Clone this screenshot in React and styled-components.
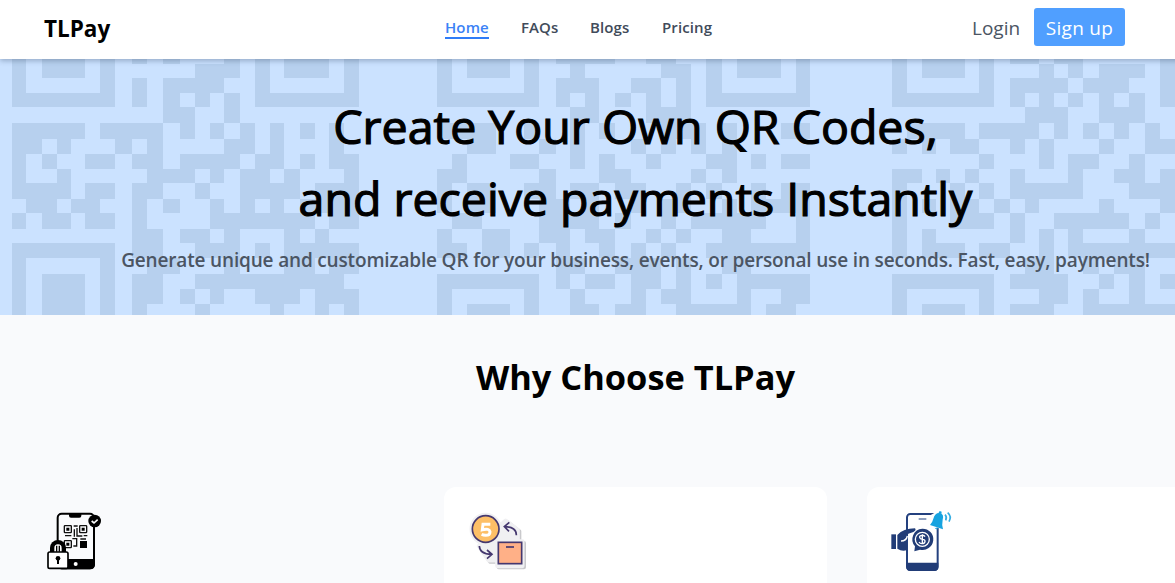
import React from "react";
import styled, { createGlobalStyle } from "styled-components";

const GlobalStyle = createGlobalStyle`
  *, *::before, *::after { box-sizing: border-box; }
  html, body { margin: 0; padding: 0; height: 583px; overflow: hidden; }
  body {
    background: #f9fafc;
    font-family: "Open Sans", "Noto Sans", sans-serif;
    color: #000;
  }
  h1, h2, p { margin: 0; }
`;

const Viewport = styled.div`
  width: 100%;
  height: 583px;
  overflow: hidden;
`;

const Page = styled.div`
  width: 1271px;
`;

const NavBar = styled.header`
  position: relative;
  z-index: 1;
  display: grid;
  grid-template-columns: 401px 527px 1fr;
  height: 59px;
  padding-left: 44px;
  background: #fff;
  box-shadow: 0 2px 5px rgba(30, 50, 80, 0.3);
`;

const Brand = styled.div`
  padding-top: 13px;
  font-size: 22.5px;
  line-height: 32px;
  font-weight: 700;
`;

const NavLinks = styled.nav`
  display: flex;
  align-items: flex-start;
  gap: 32px;
  padding-top: 18px;
`;

const NavLink = styled.a`
  width: ${(p) => p.$w}px;
  height: 21px;
  white-space: nowrap;
  font-size: 15px;
  line-height: 19px;
  font-weight: 600;
  letter-spacing: 0.1px;
  color: ${(p) => (p.$active ? "#3b82f6" : "#414b5a")};
  border-bottom: 2px solid ${(p) => (p.$active ? "#2f7cf8" : "transparent")};
`;

const Actions = styled.div`
  display: flex;
  align-items: flex-start;
  gap: 13px;
  padding-top: 8px;
`;

const LoginLink = styled.a`
  width: 49px;
  white-space: nowrap;
  font-size: 19px;
  line-height: 41px;
  color: #4b5563;
`;

const SignupButton = styled.button`
  width: 91px;
  height: 38px;
  padding: 0;
  border: 0;
  border-radius: 3px;
  background: #509fff;
  color: #fff;
  white-space: nowrap;
  font: 400 19px/40px "Open Sans", sans-serif;
  letter-spacing: 0.3px;
`;

const Hero = styled.section`
  position: relative;
  height: 256px;
  padding-top: 31px;
  background: #cbe2ff;
  text-align: center;
  overflow: hidden;
`;

const HeroPattern = styled.svg`
  position: absolute;
  left: 0;
  top: 0;
`;

const HeroTitle = styled.h1`
  position: relative;
  font-size: 46.5px;
  line-height: 72px;
  font-weight: 400;
  -webkit-text-stroke: 1.2px #000;
`;

const TitleLine = styled.span`
  display: block;
`;

const HeroText = styled.p`
  position: relative;
  padding-top: 12px;
  font-size: 19px;
  line-height: 28px;
  font-weight: 600;
  letter-spacing: -0.165px;
  color: #4b5563;
`;

const Why = styled.section`
  padding: 35px 21px 0;
`;

const WhyTitle = styled.h2`
  text-align: center;
  font-size: 34.4px;
  line-height: 54px;
  font-weight: 700;
`;

const Cards = styled.div`
  display: grid;
  grid-template-columns: repeat(3, 383px);
  gap: 40px;
  margin-top: 83px;
`;

const Card = styled.article`
  height: 220px;
  padding: 21px 24px;
  border-radius: 12px;
  background: ${(p) => (p.$plain ? "transparent" : "#fff")};
`;

const CardIcon = styled.svg`
  display: block;
  width: 64px;
  height: 64px;
`;

const ROW_EDGES = [59, 64, 78, 93, 107, 123, 139, 154, 169, 183, 199, 213, 229, 243, 258, 274, 289, 304, 315].map((y) => y - 59);

const BLOCKS = [
  {
    edges: [35, 79, 125, 170, 213, 256, 300, 344, 395, 441, 490, 541, 586, 630, 673, 720, 766, 811, 853, 900, 944, 988, 1031, 1076],
    rows: [
      "#.###.#.#.#...#.#.###.#",
      "#.###.#.....###.#.###.#",
      "#.....#.#.####..#.....#",
      "#######.#.#.#.#.#######",
      "..........##..#........",
      "#####.####.#.#.#.#.#.#.",
      "##.#...#.#....##.#...#.",
      "#.#..##.##.####.##.#.##",
      "#..#.....###.#.##.#...#",
      "####.##.##..#..####.###",
      ".##.##..#.#..#.#.#.####",
      "#.##.##.#....#######.##",
      "........##.##.#...#.#..",
      "#######.##..###.#.#####",
      "#.....#..##...#...##.##",
      "#.###.#.##..##########.",
      "#.###.#.##.#.#..###.###",
      "#.###.#.#...#....#..#.#",
    ],
  },
  {
    edges: [1312, 1357, 1402, 1445, 1487, 1530, 1573, 1617, 1667, 1709, 1755, 1798, 1844, 1894, 1939, 1984, 2028, 2074, 2119, 2165, 2211, 2254, 2298, 2342, 2388, 2430],
    rows: [
      "#.###.#.####..##..#.###.#",
      "#.###.#..#.....##.#.###.#",
      "#.....#.###..##.#.#.....#",
      "#######.#.#.#.#.#.#######",
      ".........##...###........",
      "####..#..#.#...###.#...##",
      "..##...#.#...#.#.#.#.....",
      ".#...##..#.#..#...##.#.##",
      "##.....#...##....#.#.....",
      "#.##..##.##.##..#.#..#.##",
      "#.##...##.#..#.##..#.####",
      ".##....####.#..#.#####..#",
      "#..##..##.##..#.#..##...#",
      "##.##.#.#..#.#.#..#######",
      "........##..###.#..##....",
      "#######.#.##.##.#.#.#####",
      "#.....#..#...#.##...#..##",
      "#.###.#..##.##..#####.##.",
    ],
  },
  {
    edges: [2677, 2721, 2766, 2808, 2851, 2895, 2936, 2982, 3029, 3075, 3117, 3161, 3205, 3250, 3296, 3342, 3388, 3434, 3480, 3525],
    rows: [
      "#.###.#.##.##.....#",
      "#.###.#...#.#.###.#",
      "#.....#.####.###..#",
      "#######.#.#.#.#.#.#",
      ".........###..###..",
      ".####.####.#.#.#.#.",
      "#.#.##..#.#...#..##",
      "......#...#.##..#..",
      "##.#.#..#...#..##.#",
      "#...#.#.#####...###",
      "#.#.##.#.#....#...#",
      "#...###.#..#####.#.",
      "#.#.....#.#.#...#..",
      "#.###.##..#.#######",
      ".........##..#.##..",
      "#######.####..#.#.#",
      "#.....#...##.#..#..",
      "#.###.#.###..######",
    ],
  },
];

function patternPath() {
  let d = "";
  BLOCKS.forEach(({ edges, rows }) => {
    rows.forEach((row, r) => {
      const y = ROW_EDGES[r];
      const h = ROW_EDGES[r + 1] - y;
      for (const run of row.matchAll(/#+/g)) {
        const x = Math.round(edges[run.index] / 3);
        const x2 = Math.round(edges[run.index + run[0].length] / 3);
        d += `M${x} ${y}h${x2 - x}v${h}h${x - x2}z`;
      }
    });
  });
  return d;
}

const PATTERN = patternPath();

function LockedQrIcon() {
  return (
    <CardIcon viewBox="30 24 192 192" fill="none">
      <rect x="68" y="41" width="109" height="164" rx="12" fill="#fafbfd" stroke="#000" strokeWidth="6" />
      <path d="M102 41h37v6q0 6-6 6h-25q-6 0-6-6z" fill="#000" />
      <path d="M66 177h114v16q0 15-14 15H80q-14 0-14-15z" fill="#000" />
      <circle cx="122" cy="192" r="6" fill="#fff" />
      <g stroke="#111" strokeWidth="4">
        <rect x="88" y="77" width="21" height="21" rx="2" />
        <rect x="134" y="77" width="21" height="21" rx="2" />
        <rect x="88" y="122" width="21" height="21" rx="2" />
        <path d="M116 78h12M118 88v22M126 84v26M90 107h19M112 116h13v22h-10M128 108h14M146 107h11M136 117h17" />
      </g>
      <path d="M94 83h9v9h-9zM140 83h9v9h-9zM94 128h9v9h-9zM135 123h21v21h-21z" fill="#000" />
      <circle cx="179" cy="63" r="19" fill="#000" />
      <path d="m170 63 7 6 11-10" stroke="#fff" strokeWidth="5" />
      <path d="M45 157v-13a24 24 0 0 1 48 0v13z" fill="#000" />
      <path d="M58 156v-12a11 11 0 0 1 22 0v12z" fill="#fff" />
      <path d="M65 137v18M73 137v18" stroke="#000" strokeWidth="4" />
      <rect x="39" y="156" width="60" height="49" rx="5" fill="#fff" stroke="#000" strokeWidth="5" />
      <circle cx="69" cy="175" r="7" fill="#000" />
      <path d="M69 176v16" stroke="#000" strokeWidth="6" />
    </CardIcon>
  );
}

function ExchangeIcon() {
  return (
    <CardIcon viewBox="24 24 192 192" fill="none">
      <g transform="translate(4 4)" fill="#c9c9cc" stroke="#c9c9cc" strokeWidth="12" strokeLinejoin="round">
        <circle cx="77" cy="87" r="40" />
        <path d="M57 138 86 181h26v17h76v-73h-14V90l-36-28z" />
      </g>
      <g fill="#f0f0f2" stroke="#f0f0f2" strokeWidth="13" strokeLinejoin="round">
        <circle cx="77" cy="87" r="42" />
        <path d="M57 138 86 181h26v17h75v-74h-14V90l-36-28z" />
      </g>
      <circle cx="77" cy="87" r="40" fill="#fdbf66" stroke="#45386f" strokeWidth="5" />
      <path d="M91 73H69l-2 16q21-5 23 6 0 11-13 11-7 0-12-3" stroke="#fff" strokeWidth="9" />
      <rect x="115" y="127" width="70" height="64" fill="#ffb087" stroke="#45386f" strokeWidth="5" />
      <path d="M138 141h24" stroke="#45386f" strokeWidth="5" />
      <g stroke="#45386f" strokeWidth="5">
        <path d="M169 106q1-25-35-26m14-13-15 13 14 14" />
        <path d="M58 138q1 24 36 25m-13-13 15 13-15 13" />
      </g>
    </CardIcon>
  );
}

function PaymentAlertIcon() {
  return (
    <CardIcon viewBox="33 24 192 192" fill="none">
      <rect x="81" y="42" width="92" height="168" rx="10" fill="#fff" stroke="#24417f" strokeWidth="6" />
      <path d="M79 188h96v13q0 12-12 12H91q-12 0-12-12z" fill="#213c77" />
      <path d="M116 57h23" stroke="#59719f" strokeWidth="4" />
      <path d="M34 103h14v44H34z" fill="#213c77" />
      <path d="M52 105q18-20 53-20 5 6-5 11l-15 5q-4 4-4 10v39q-14 6-29-4z" fill="#213c77" />
      <path d="M63 123q16 0 19-15" stroke="#fff" strokeWidth="4" />
      <path d="M127 86a32 32 0 1 1-7 63l-17 5 2-15a32 32 0 0 1 22-53" fill="#213c77" />
      <circle cx="127" cy="118" r="21" stroke="#fff" strokeWidth="4" />
      <path d="M135 110q-3-5-9-4-8 1-7 6 1 5 8 6 9 1 8 7-1 6-9 6-6 0-9-5m10-23v30" stroke="#fff" strokeWidth="4" />
      <path d="m145 75 49 14 11-39-33-16-21 12z" fill="#fff" />
      <path d="M150 75q7-7 10-19 5-19 20-17 13 4 8 20-3 14 1 29z" fill="#16a3e0" />
      <path d="m175 40 4-7 6 2-1 7M164 83q5 8 12 3z" fill="#16a3e0" />
      <path d="M195 44q7 7 2 17M203 38q13 11 4 27" stroke="#35ade2" strokeWidth="5" />
    </CardIcon>
  );
}

export default function App() {
  return (
    <Viewport>
      <GlobalStyle />
      <Page>
        <NavBar>
          <Brand>TLPay</Brand>
          <NavLinks>
            <NavLink $active $w={44}>Home</NavLink>
            <NavLink $w={37}>FAQs</NavLink>
            <NavLink $w={40}>Blogs</NavLink>
            <NavLink $w={50}>Pricing</NavLink>
          </NavLinks>
          <Actions>
            <LoginLink>Login</LoginLink>
            <SignupButton>Sign up</SignupButton>
          </Actions>
        </NavBar>
        <Hero>
          <HeroPattern width="1271" height="256" shapeRendering="crispEdges" aria-hidden="true">
            <path d={PATTERN} fill="#b7d0ee" />
          </HeroPattern>
          <HeroTitle>
            <TitleLine>Create Your Own QR Codes,</TitleLine>
            <TitleLine>and receive payments Instantly</TitleLine>
          </HeroTitle>
          <HeroText>
            Generate unique and customizable QR for your business, events, or personal use in seconds. Fast, easy, payments!
          </HeroText>
        </Hero>
        <Why>
          <WhyTitle>Why Choose TLPay</WhyTitle>
          <Cards>
            <Card $plain><LockedQrIcon /></Card>
            <Card><ExchangeIcon /></Card>
            <Card><PaymentAlertIcon /></Card>
          </Cards>
        </Why>
      </Page>
    </Viewport>
  );
}
